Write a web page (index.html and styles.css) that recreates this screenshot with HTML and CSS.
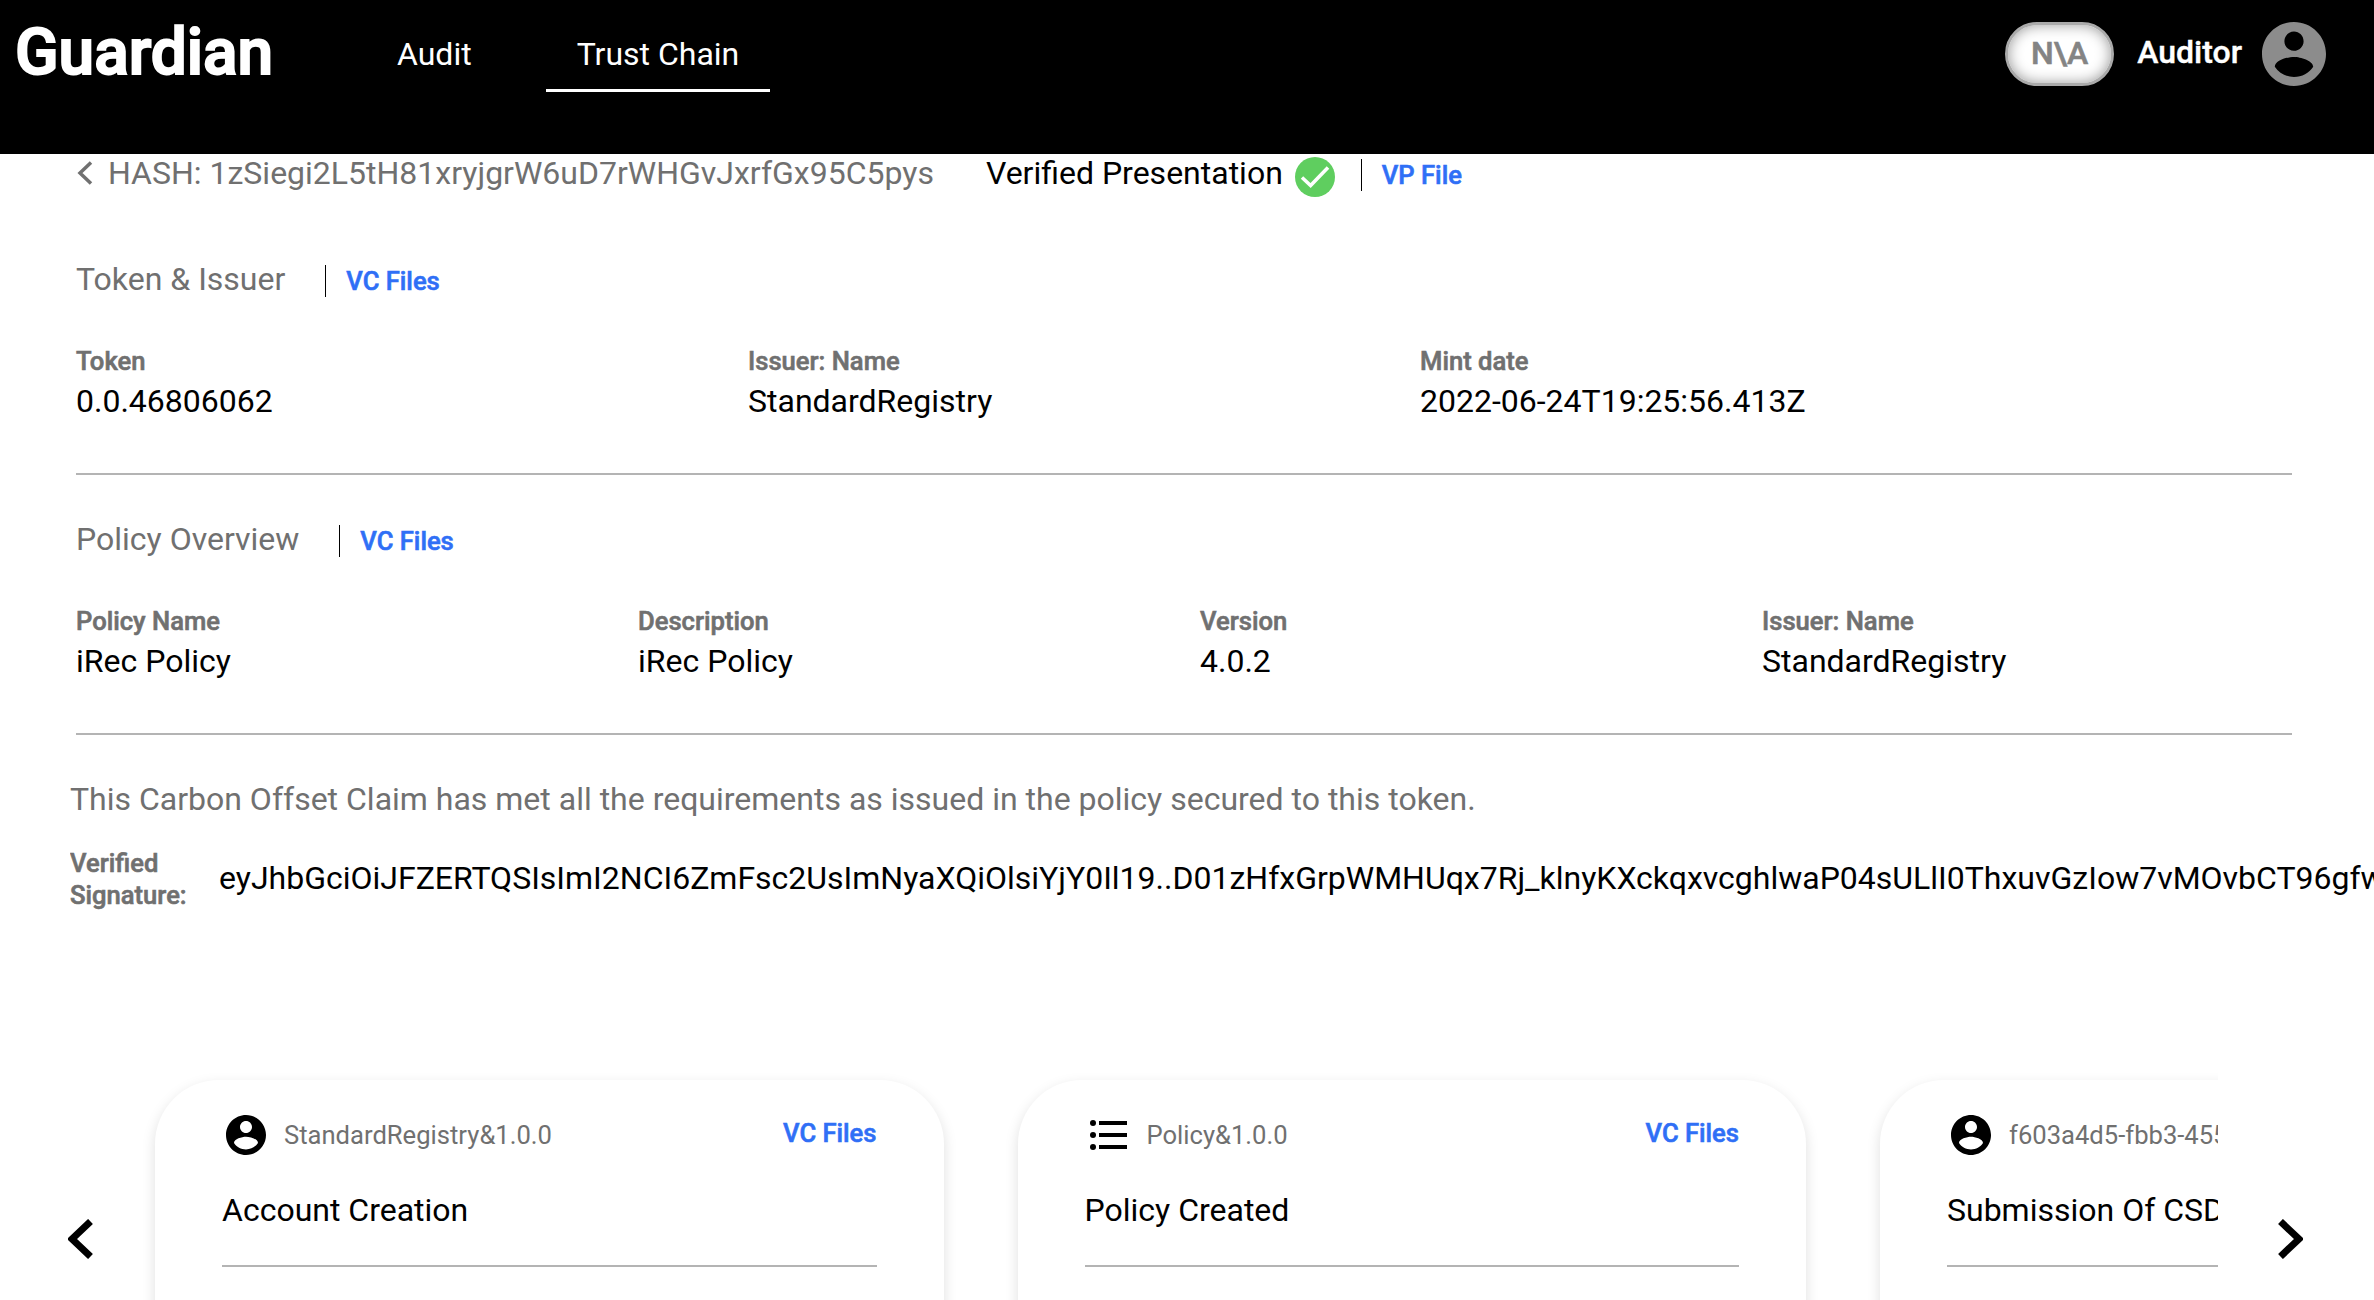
FILE: index.html
```html
<!DOCTYPE html>
<html lang="en">
<head>
<meta charset="utf-8">
<title>Guardian</title>
<link rel="stylesheet" href="styles.css">
</head>
<body>
<svg class="defs" width="0" height="0">
  <symbol id="account" viewBox="2 2 20 20"><path d="M12 2C6.48 2 2 6.48 2 12s4.48 10 10 10 10-4.48 10-10S17.52 2 12 2zm0 3c1.66 0 3 1.34 3 3s-1.34 3-3 3-3-1.34-3-3 1.34-3 3-3zm0 14.2c-2.5 0-4.71-1.28-6-3.22.03-1.99 4-3.08 6-3.08 1.99 0 5.97 1.09 6 3.08-1.29 1.94-3.5 3.22-6 3.22z"/></symbol>
</svg>
<header class="topbar">
  <div class="brand">Guardian</div>
  <nav class="tabs">
    <a class="tab">Audit</a>
    <a class="tab active">Trust Chain</a>
  </nav>
  <div class="user">
    <span class="pill">N\A</span>
    <span class="role">Auditor</span>
    <svg class="avatar"><use href="#account"/></svg>
  </div>
</header>
<main>
  <div class="heading hash-row">
    <svg class="back" viewBox="0 0 16 24"><path d="M14 1.5 3 12l11 10.5"/></svg>
    <span class="hash">HASH: 1zSiegi2L5tH81xryjgrW6uD7rWHGvJxrfGx95C5pys</span>
    <span class="vp">Verified Presentation</span>
    <svg class="check" viewBox="0 0 40 40"><circle cx="20" cy="20" r="20"/><path d="M7 20.5l8.600 8L33 10.500"/></svg>
    <a class="link">VP File</a>
  </div>
  <section class="section">
    <div class="heading"><h2>Token &amp; Issuer</h2><a class="link">VC Files</a></div>
    <div class="fields three">
      <div><label>Token</label><p>0.0.46806062</p></div>
      <div><label>Issuer: Name</label><p>StandardRegistry</p></div>
      <div><label>Mint date</label><p>2022-06-24T19:25:56.413Z</p></div>
    </div>
  </section>
  <section class="section">
    <div class="heading"><h2>Policy Overview</h2><a class="link">VC Files</a></div>
    <div class="fields four">
      <div><label>Policy Name</label><p>iRec Policy</p></div>
      <div><label>Description</label><p>iRec Policy</p></div>
      <div><label>Version</label><p>4.0.2</p></div>
      <div><label>Issuer: Name</label><p>StandardRegistry</p></div>
    </div>
  </section>
  <p class="claim">This Carbon Offset Claim has met all the requirements as issued in the policy secured to this token.</p>
  <div class="signature">
    <label>Verified<br>Signature:</label>
    <p>eyJhbGciOiJFZERTQSIsImI2NCI6ZmFsc2UsImNyaXQiOlsiYjY0Il19..D01zHfxGrpWMHUqx7Rj_klnyKXckqxvcghlwaP04sULlI0ThxuvGzIow7vMOvbCT96gfw</p>
  </div>
  <div class="carousel">
    <svg class="arrow" viewBox="0 0 25 40"><path d="M22.500 2.500 4 20l18.500 17.500"/></svg>
    <div class="viewport">
      <article class="card">
        <div class="card-head"><svg class="icon"><use href="#account"/></svg><span>StandardRegistry&amp;1.0.0</span><a class="link">VC Files</a></div>
        <h3>Account Creation</h3>
      </article>
      <article class="card">
        <div class="card-head"><svg class="icon" viewBox="0 0 40 40"><circle cx="4" cy="8" r="3"/><circle cx="4" cy="20" r="3"/><circle cx="4" cy="32" r="3"/><path d="M10 6h28v4H10zM10 18h28v4H10zM10 30h28v4H10z"/></svg><span>Policy&amp;1.0.0</span><a class="link">VC Files</a></div>
        <h3>Policy Created</h3>
      </article>
      <article class="card">
        <div class="card-head"><svg class="icon"><use href="#account"/></svg><span>f603a4d5-fbb3-455</span></div>
        <h3>Submission Of CSD</h3>
      </article>
    </div>
    <svg class="arrow" viewBox="0 0 25 40"><path d="M2.500 2.500 21 20 2.500 37.500"/></svg>
  </div>
</main>
</body>
</html>
```
FILE: styles.css
```css
* { box-sizing: border-box; margin: 0; padding: 0; }
html, body { height: 1300px; overflow: hidden; }
body { background: #fff; color: #000; font: 400 32px/40px Roboto, sans-serif; }
.defs { display: block; }
.topbar { display: flex; align-items: flex-start; height: 154px; background: #000; color: #fff; padding-left: 15px; }
.brand { width: 351px; font-size: 64px; line-height: 80px; font-weight: 500; -webkit-text-stroke: 2px #fff; padding-top: 13px; }
.tabs { display: flex; }
.tab { padding: 34px 31px 15px; height: 92px; }
.tab + .tab { margin-left: 43px; }
.tab.active { border-bottom: 3px solid #fff; }
.user { display: flex; align-items: center; margin-left: auto; margin-right: 48px; padding-top: 22px; height: 86px; }
.pill { width: 109px; height: 64px; border: 3px solid #aaa; border-radius: 32px; background: #fff; box-shadow: inset 0 0 14px #999; color: #848484; font-weight: 500; -webkit-text-stroke: .6px #848484; line-height: 56px; text-align: center; }
.role { font-weight: 500; -webkit-text-stroke: .4px #fff; margin: -4px 20px 0 23px; }
.avatar { width: 64px; height: 64px; fill: #8c8c8c; }
main { padding: 0 82px 0 76px; }
.heading { display: flex; align-items: center; height: 40px; color: #707070; }
.hash-row { margin-top: -1px; }
.back { width: 16px; height: 24px; fill: none; stroke: #707070; stroke-width: 3.5; margin: 0 15px 0 1px; }
.vp { color: #000; margin-left: 52px; }
.check { width: 40px; height: 40px; margin: 8px 26px 0 12px; fill: #5fce5f; }
.check path { fill: none; stroke: #fff; stroke-width: 3.5; }
.heading .link { line-height: 32px; margin-top: 4px; padding-left: 20px; border-left: 1px solid #000; }
.link { color: #2f6ff6; font-size: 25.6px; font-weight: 500; -webkit-text-stroke: .6px #2f6ff6; }
h2, h3 { font-size: 32px; font-weight: 400; }
.heading h2 { margin-right: 40px; }
.section { height: 260px; padding-top: 44px; border-bottom: 2px solid #b4b4b4; }
.hash-row + .section { height: 282px; padding-top: 66px; }
.fields { display: grid; margin-top: 46px; }
.fields p { margin-top: 4px; }
.three { grid-template-columns: repeat(3, 672px); }
.four { grid-template-columns: repeat(4, 562px); }
label { display: block; color: #707070; font-size: 25.6px; font-weight: 500; -webkit-text-stroke: .6px #707070; line-height: 32px; }
.claim { color: #707070; margin: 44px 0 0 -6px; }
.signature { display: flex; align-items: center; margin: 28px -82px 0 -6px; height: 64px; white-space: nowrap; overflow: hidden; }
.signature label { width: 149px; flex: none; }
.signature p { margin-top: -2px; }
.carousel { display: flex; margin: 139px 0 0 -8px; }
.arrow { width: 25px; height: 40px; flex: none; margin-top: 169px; fill: none; stroke: #000; stroke-width: 7; }
.viewport { display: flex; flex: none; gap: 74px; width: 2085px; padding: 30px 0 0 22px; margin: 0 60px 0 40px; overflow: hidden; height: 260px; }
.card { flex: none; width: 788.5px; height: 500px; border-radius: 64px; padding: 35px 67px; box-shadow: 0 5px 14px rgba(0,0,0,.13); }
.card-head { display: flex; align-items: center; height: 40px; color: #707070; font-size: 25.6px; }
.icon { width: 40px; height: 40px; margin: 0 18px 0 4px; fill: #000; }
.card-head .link { margin: -4px 0 0 auto; }
h3 { margin-top: 35px; height: 77px; border-bottom: 2px solid #b4b4b4; }
```
